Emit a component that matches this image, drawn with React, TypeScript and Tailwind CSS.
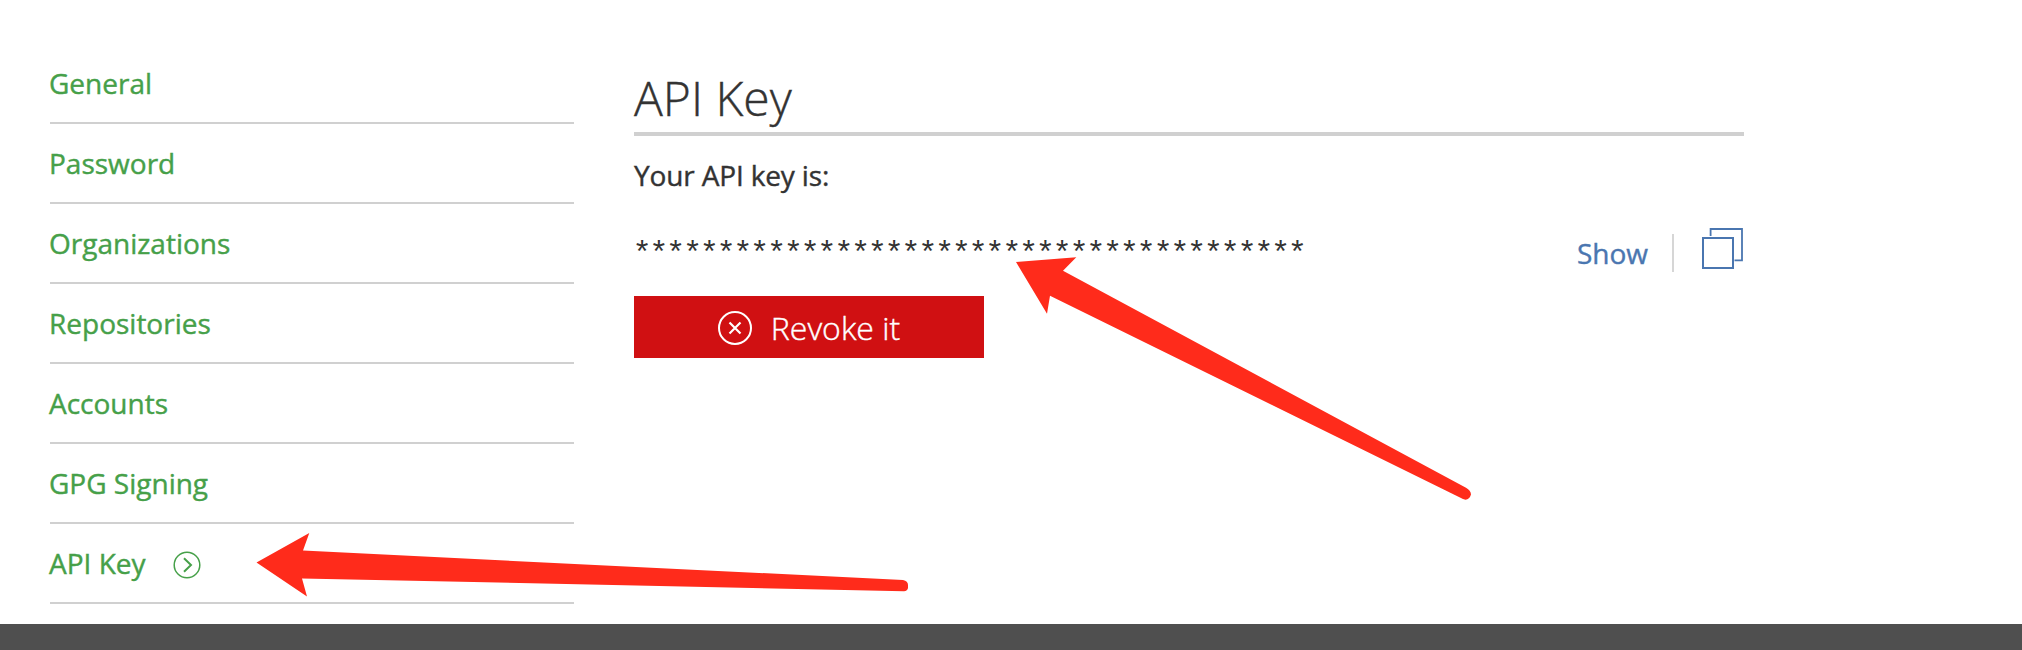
const items = ["General", "Password", "Organizations", "Repositories", "Accounts", "GPG Signing", "API Key"];

function ChevronCircle() {
  return (
    <svg className="ml-[27px] mt-[3px] h-7 w-7" viewBox="0 0 28 28" fill="none" stroke="currentColor">
      <circle cx="14" cy="14" r="12.8" strokeWidth="1.5" />
      <path d="M11 7.2 L18 14 L11 20.8" strokeWidth="2" />
    </svg>
  );
}

function CrossCircle() {
  return (
    <svg className="mt-0.5 h-[34px] w-[34px]" viewBox="0 0 34 34" fill="none" stroke="currentColor">
      <circle cx="17" cy="17" r="16" strokeWidth="2" />
      <path d="M11.5 11.5 L22.5 22.5 M22.5 11.5 L11.5 22.5" strokeWidth="2.2" />
    </svg>
  );
}

function CopyIcon() {
  return (
    <svg className="h-[42px] w-[42px]" viewBox="0 0 42 42" fill="none" stroke="currentColor">
      <rect x="2" y="10" width="30" height="30" strokeWidth="2" />
      <path d="M9.6 8 V1 H41 V32.3 H33.5" strokeWidth="1.8" />
    </svg>
  );
}

function Arrows() {
  return (
    <svg className="pointer-events-none absolute inset-0 h-[650px] w-[2022px]" viewBox="0 0 2022 650" fill="#ff2b1b">
      <path d="M1016 262 L1076.3 257.3 L1063 270.7 L1466 487.8 Q1470.8 490.5 1471 494.5 Q1469.5 499.5 1465.5 499.8 L1463 499 L1050 295.7 L1047 313.7 Z" />
      <path d="M256.5 562.6 L309.3 533 L303 550.6 L903 580 Q908 581 908 585 V588 Q907.5 591 904 591.2 L302 578.4 L307 596.5 Z" />
    </svg>
  );
}

export default function App() {
  return (
    <div className="relative flex h-[650px] w-[2022px] flex-col overflow-hidden bg-white font-['Open_Sans',sans-serif] text-[28px] text-[#333333] [-webkit-text-stroke:0.4px]">
      <div className="flex h-[624px] pl-[50px]">
        <nav className="w-[524px] pt-11 text-[#46a049]">
          {items.map((item) => (
            <a key={item} className="flex h-20 items-center border-b-2 border-[#d0d0d0] leading-[38px]">
              <span className="-ml-px">{item}</span>
              {item === "API Key" && <ChevronCircle />}
            </a>
          ))}
        </nav>
        <main className="ml-[60px] w-[1110px] pt-[66px]">
          <h1 className="h-[70px] border-b-4 border-[#d0d0d0] text-[48px] font-light leading-[64px]">API Key</h1>
          <p className="mt-[19px] leading-10 tracking-[-0.15px]">Your API key is:</p>
          <div className="mt-[31px] flex h-[50px] justify-between">
            <code className="-ml-[1.5px] pt-[9px] font-['Liberation_Mono',monospace] text-[32px] leading-10 tracking-[-2.4px] [-webkit-text-stroke:0px]">
              {"*".repeat(40)}
            </code>
            <div className="mr-px flex items-start text-[#4a76b0]">
              <a className="mt-[7px] leading-10">Show</a>
              <span className="ml-6 mt-2 h-[38px] w-0.5 bg-[#d6d6d6]" />
              <a className="ml-[27px] mt-[2px]"><CopyIcon /></a>
            </div>
          </div>
          <button className="mt-5 flex h-[62px] w-[350px] items-center justify-center gap-[19px] bg-[#d01012] text-[32px] font-light text-white">
            <CrossCircle />
            <span className="mt-0.5">Revoke it</span>
          </button>
        </main>
      </div>
      <footer className="h-[26px] bg-[#4f4f4f]" />
      <Arrows />
    </div>
  );
}
